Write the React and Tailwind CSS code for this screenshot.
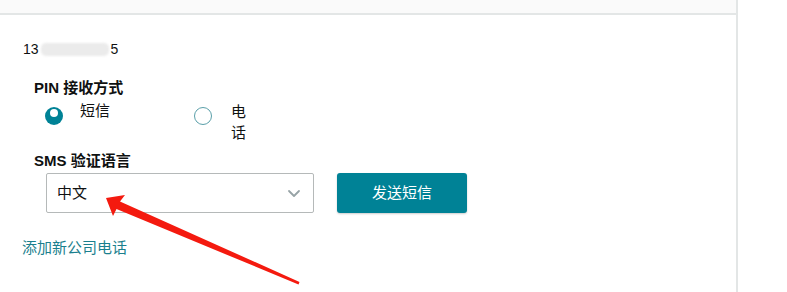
import React from "react";

export default function App() {
  const font = { fontFamily: '"Liberation Sans", "Noto Sans CJK SC", sans-serif' };
  return (
    <div className="relative w-[787px] h-[292px] bg-white overflow-hidden text-[15px] text-[#0f1111]" style={font}>
      <div className="flex h-full">
        <div className="w-[738px] h-full border-r-2 border-[#e3e6e6] flex flex-col">
          <div className="h-[15px] bg-[#fafafa] border-b-2 border-[#e3e6e6] shrink-0" />
          <div className="pl-[23px] pt-[24px] flex items-center h-[20px] leading-[20px] box-content text-[14px]">
            <span>13</span>
            <span className="inline-block w-[68px] h-[13px] bg-[#ebebeb] rounded-[5px] blur-[1px] mx-[2px]" />
            <span>5</span>
          </div>
          <div className="pl-[34px] pt-[19px] font-bold leading-[20px]">PIN 接收方式</div>
          <div className="pl-[45px] pt-[3px] flex items-start">
            <div className="flex items-start w-[149px]">
              <span className="relative mt-[6px] w-[18px] h-[18px] rounded-full bg-[#008296] shrink-0">
                <span className="absolute left-[5px] top-[2px] w-[8px] h-[8px] rounded-full bg-white" />
              </span>
              <span className="ml-[17px] leading-[20px]">短信</span>
            </div>
            <div className="flex items-start">
              <span className="mt-[6px] w-[18px] h-[18px] rounded-full border-[1.5px] border-[#5a9fa9] bg-white shrink-0" />
              <span className="ml-[19px] w-[16px] leading-[21px] break-all">电话</span>
            </div>
          </div>
          <div className="pl-[34px] pt-[8px] font-bold leading-[20px]">SMS 验证语言</div>
          <div className="pl-[46px] pt-[2px] flex items-center">
            <div className="w-[268px] h-[40px] border border-[#b5b9b9] rounded-[2px] flex items-center justify-between pl-[10px] pr-[12px]">
              <span>中文</span>
              <svg width="14" height="9" viewBox="0 0 14 9" fill="none">
                <path d="M2 2 L7 7 L12 2" stroke="#97a3a6" strokeWidth="1.8" strokeLinecap="round" strokeLinejoin="round" />
              </svg>
            </div>
            <button className="ml-[23px] w-[130px] h-[40px] rounded-[3px] bg-[#008296] text-white text-[15px] shadow-[0_1px_2px_rgba(0,0,0,0.2)]">
              发送短信
            </button>
          </div>
          <div className="pl-[22px] pt-[25px] leading-[20px] text-[#1b7f8e]">添加新公司电话</div>
        </div>
        <div className="flex-1" />
      </div>
      <svg className="absolute left-0 top-0 pointer-events-none" width="787" height="292" viewBox="0 0 787 292">
        <polygon points="106,198 125,195 120,201.5 299.5,282 298.5,284.5 116.5,209 113,216" fill="#f41a0f" />
      </svg>
    </div>
  );
}
